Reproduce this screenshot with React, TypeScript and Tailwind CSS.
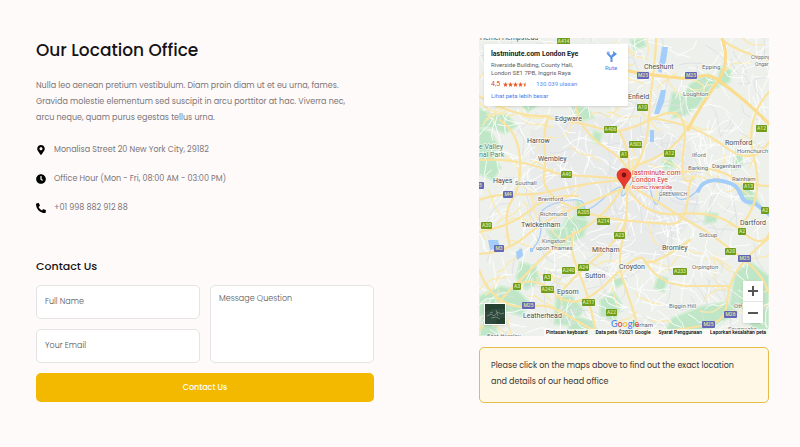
import React from "react";
import { FaClock, FaMapMarkerAlt, FaPhoneAlt } from "react-icons/fa";

type Place = [name: string, x: number, y: number, size: number, color?: string];
type Shield = [name: string, x: number, y: number, width: number];

const places: Place[] = [
  ["Hemel Hempstead", 480, 40, 7],
  ["Cheshunt", 644, 69, 7],
  ["Epping", 702, 69, 6],
  ["Chipping", 751, 59, 5],
  ["Ongar", 755, 66, 5],
  ["Enfield", 628, 99, 7],
  ["Loughton", 683, 96, 6],
  ["Edgware", 555, 121, 7],
  ["Harrow", 527, 143, 7],
  ["Wembley", 538, 161, 7],
  ["e Valley", 479, 149, 7, "#4f8a76"],
  ["nal Park", 479, 157, 7, "#4f8a76"],
  ["Hayes", 493, 183, 7],
  ["Southall", 515, 185, 6],
  ["Brentford", 538, 201, 6],
  ["Richmond", 540, 216, 6],
  ["Twickenham", 521, 227, 7],
  ["Kingston", 542, 243, 6],
  ["upon Thames", 536, 250, 6],
  ["Mitcham", 592, 252, 7],
  ["Sutton", 585, 278, 7],
  ["Epsom", 557, 294, 7],
  ["Leatherhead", 523, 318, 7],
  ["East Horsley", 487, 338, 6],
  ["Croydon", 619, 269, 7],
  ["Bromley", 662, 250, 7],
  ["Orpington", 692, 269, 6],
  ["Biggin Hill", 669, 308, 6],
  ["erham", 636, 327, 6],
  ["Sidcup", 699, 237, 6],
  ["Dartford", 740, 225, 7],
  ["Rainham", 732, 181, 6],
  ["Romford", 725, 145, 7],
  ["Hornchurch", 737, 153, 6],
  ["Ilford", 692, 157, 6],
  ["Barking", 688, 170, 6],
  ["Dagenham", 712, 168, 6],
  ["GREENWICH", 659, 196, 5],
  ["Otf", 734, 308, 6],
  ["Sevenoaks", 728, 331, 6],
];

const greenShields: Shield[] = [
  ["A414", 557, 41, 13], ["A10", 637, 107, 11], ["A406", 604, 129, 13], ["A12", 756, 128, 11],
  ["A503", 629, 144, 13], ["A1", 620, 154, 8], ["A12", 664, 153, 11], ["A40", 561, 174, 11],
  ["A13", 743, 186, 11], ["A205", 577, 212, 13], ["A214", 597, 221, 13], ["A30", 481, 225, 11],
  ["A23", 614, 235, 11], ["A2", 738, 231, 8], ["A2", 761, 210, 8], ["A3", 543, 277, 8],
  ["A240", 562, 270, 13], ["A24", 578, 267, 11], ["A3", 513, 286, 8], ["A243", 541, 289, 13],
  ["A217", 582, 302, 13], ["A22", 606, 312, 11], ["A233", 673, 271, 14], ["A20", 725, 251, 11],
];

const blueShields: Shield[] = [
  ["M25", 637, 75, 12], ["M25", 685, 75, 12], ["M4", 503, 194, 10], ["5", 477, 185, 7],
  ["M3", 494, 248, 10], ["M25", 522, 305, 13], ["M25", 738, 258, 13], ["M26", 724, 314, 13],
  ["M25", 702, 324, 13],
];

const parks = [
  "M479 128l12 4 8 14-4 12 6 10-8 12-14-6z",
  "M690 84l18-10 10 6-12 14-8 12-14 10-12 2 6-14z",
  "M672 92l14 4-6 14-12 4z",
  "M630 40l14-2 2 8-12 4z",
  "M720 66l12 4-2 12-14 6z",
  "M479 108l12 6 16 0 10 12-12 8-14-6-12 0z",
  "M566 218l16-4 6 8-4 14-14 8-18 4-4-8 12-8z",
  "M546 230l20-2 2 14-12 4z",
  "M576 198l8 8 2 14-10-2z",
  "M735 272l16-10 18 14v60l-16-6-10-22-14 0z",
  "M672 318l30-12 24-4 12 10-22 14-32 10h-22z",
  "M479 296l22-10 16 4 14 14-10 12-20-6-22 6z",
  "M520 262l16 4 4 16-14 8-10-12z",
  "M556 296l16 0 12 14-12 16-18-2z",
  "M572 316l20 4 8 16h-34z",
  "M600 300l14-8 8 12-8 18-14-6z",
  "M738 184l14 6 8 14-10 2-10-10z",
  "M662 160l10-2 4 8-12 4z",
  "M594 130l8 4-2 10-8-2z",
  "M516 100l16-6 8 10-12 8z",
  "M612 278l10-4 4 8-10 6z",
  "M735 154l8 2-2 12-8 2z",
  "M706 212l12 2-2 8-12 2z",
  "M482 318l14 4 2 14h-18z",
  "M658 276l10 2-4 14-10-4z",
  "M572 106l16 2 6 10-16 4z",
];

const mainRoads = [
  "M618 68C636 74 660 76 680 78S704 70 718 80S748 102 769 124",
  "M722 38Q730 60 720 78C708 96 696 112 688 130",
  "M722 40Q738 52 769 60",
  "M656 38C656 64 650 90 649 116S642 160 630 176",
  "M688 126Q676 150 650 160T626 178",
  "M479 160C516 158 536 166 552 172S596 174 626 180",
  "M479 200C504 190 526 198 548 192S592 182 626 180",
  "M479 232Q512 226 530 210T578 196",
  "M479 254Q508 252 526 236T580 206T622 188",
  "M626 182C612 206 598 222 574 234S534 268 514 286S494 314 479 330",
  "M626 184C630 216 622 234 620 256S632 298 640 336",
  "M626 184Q642 218 680 214T740 230T769 234",
  "M624 184C650 194 668 210 690 222S724 244 744 260S762 280 769 292",
  "M479 270C492 304 514 310 536 306S580 328 604 334S672 330 702 326S724 306 730 286S754 250 769 238",
  "M548 118Q590 124 604 130T654 118T684 146T694 178",
  "M548 118C540 138 548 156 544 174S562 204 584 212S642 222 668 224S684 190 692 178",
  "M560 38Q574 78 576 104T606 148T626 180",
  "M479 96Q514 118 548 116",
  "M650 118Q696 124 724 146T769 142",
  "M626 178C650 168 674 176 698 170S736 186 769 186",
  "M574 232C566 254 582 274 588 298S594 322 596 336",
  "M556 298Q572 278 596 258T624 226",
  "M514 286Q536 274 556 294T608 282T644 260T690 240",
  "M644 260Q660 286 688 286T730 286",
  "M500 120Q518 132 520 158T512 200T510 246",
  "M769 92Q744 120 754 158T744 222",
  "M620 132Q632 156 628 178",
];

// Park-Miller generator: keeps the side street pattern identical on every render.
function makeStreets(): string[] {
  let seed = 4711;
  const random = () => {
    seed = (seed * 16807) % 2147483647;
    return seed / 2147483647;
  };
  const streets: string[] = [];
  for (let i = 0; i < 620; i++) {
    let x = 475 + random() * 298;
    let y = 34 + random() * 306;
    let angle = random() * Math.PI * 2;
    let d = `M${x.toFixed(1)} ${y.toFixed(1)}`;
    for (let step = 0; step < 4; step++) {
      angle += (random() - 0.5) * 1.1;
      x += Math.cos(angle) * (4 + random() * 6);
      y += Math.sin(angle) * (4 + random() * 6);
      d += `L${x.toFixed(1)} ${y.toFixed(1)}`;
    }
    streets.push(d);
  }
  return streets;
}

const streets = makeStreets();

function ShieldMark({ shield, fill }: { shield: Shield; fill: string }) {
  const [name, x, y, width] = shield;
  return (
    <g>
      <rect x={x} y={y - 3} width={width} height="7" rx="1" fill={fill} />
      <text x={x + width / 2} y={y + 2} fontSize="5" fontWeight="500" textAnchor="middle" fill="#dfeaa0">
        {name}
      </text>
    </g>
  );
}

function MapDrawing() {
  return (
    <svg
      viewBox="479 38 290 298"
      preserveAspectRatio="xMidYMid slice"
      className="block h-full w-full"
      fontFamily="Roboto, sans-serif"
      role="img"
      aria-label="Map of London"
    >
      <rect x="479" y="38" width="290" height="298" fill="#edf0eb" />
      <path d="M530 130L600 116 690 140 700 210 660 260 580 250 530 210z" fill="#e9ebea" />
      <g fill="#bfe6c6">
        {parks.map((d) => (
          <path key={d} d={d} strokeLinejoin="round" stroke="#d3eed5" strokeWidth="2" />
        ))}
      </g>
      <g fill="none" strokeLinejoin="round">
        {streets.map((d, i) => (
          <path
            key={d}
            d={d}
            stroke={i % 6 === 0 ? "#fbe9ae" : i % 4 === 1 ? "#dde1e4" : "#ffffff"}
            strokeWidth={i % 6 === 0 ? 1.3 : 0.9}
          />
        ))}
      </g>
      <g fill="#a5cdf9">
        <path d="M662 47l6 0-2 14-5 12-3-2z" />
        <path d="M661 90l5 0-2 12-5 12-5 0z" />
        <path d="M650 130l4 0 0 12-4 0z" />
        <path d="M488 240l10 0 2 8-10 2z" />
        <path d="M516 252l6-4 1 8-6 4z" />
        <path d="M530 248l3 0 0 4-3 0z" />
      </g>
      <g fill="none" stroke="#a5cdf9" strokeLinecap="round">
        <path d="M532 250Q544 236 540 222T560 202T584 206T604 198T622 192T632 182T650 188T660 196T672 192T698 190" strokeWidth="1.2" />
        <path d="M698 191C704 176 722 180 732 184S740 202 748 202S758 206 771 216" strokeWidth="4" />
      </g>
      <g fill="none" strokeLinecap="round" strokeLinejoin="round">
        {mainRoads.map((d) => (
          <path key={d} d={d} stroke="#fae3a0" strokeWidth="2.2" />
        ))}
        <path
          d="M618 68C636 74 660 76 680 78S704 70 718 80S748 102 769 124M722 38Q730 60 720 78C708 96 696 112 688 130"
          stroke="#fbdc8c"
          strokeWidth="3"
        />
      </g>
      <g>
        {places.map(([name, x, y, size, color]) => (
          <text
            key={name}
            x={x}
            y={y}
            fontSize={size}
            fill={color ?? (size === 7 ? "#4c4f53" : "#6a6d71")}
            stroke="#ffffff"
            strokeWidth="1.5"
            strokeOpacity="0.7"
            paintOrder="stroke"
          >
            {name}
          </text>
        ))}
      </g>
      {greenShields.map((shield) => (
        <ShieldMark key={`${shield[0]}-${shield[1]}`} shield={shield} fill="#6f9c1c" />
      ))}
      {blueShields.map((shield) => (
        <ShieldMark key={`${shield[0]}-${shield[1]}`} shield={shield} fill="#6467b8" />
      ))}
      <g fill="#d5342b" stroke="#ffffff" strokeWidth="1.5" strokeOpacity="0.8" paintOrder="stroke">
        <text x="632" y="175" fontSize="7">lastminute.com</text>
        <text x="632" y="182" fontSize="7">London Eye</text>
        <text x="632" y="189" fontSize="6">Iconic riverside</text>
      </g>
      <path d="M624 189c-1-6-7-9-7-14a7 6.5 0 0 1 14 0c0 5-6 8-7 14z" fill="#ea3a30" stroke="#b9261e" strokeWidth="0.6" />
      <circle cx="624" cy="175" r="2.4" fill="#7d130d" />
    </svg>
  );
}

function PlaceCard() {
  return (
    <div className="absolute left-[5px] top-[6px] flex h-[62px] w-[144px] justify-between rounded-xs bg-white px-[7px] pt-[5px] font-[Roboto,sans-serif] shadow-sm">
      <div className="whitespace-nowrap text-[6px] leading-[8px] text-[#5d6063]">
        <h3 className="text-[7px] font-bold leading-[10px] text-[#1c1c1c]">lastminute.com London Eye</h3>
        <p className="mt-[2px]">
          Riverside Building, County Hall,
          <br />
          London SE1 7PB, Inggris Raya
        </p>
        <p className="mt-[2px] flex items-center gap-[2px] leading-[10px]">
          <span className="text-[7px] text-[#dd4b2b]">4,5</span>
          <svg viewBox="0 0 50 10" className="h-[5px] w-[27px]" fill="#e7612b" aria-hidden="true">
            {[0, 10, 20, 30].map((x) => (
              <path key={x} transform={`translate(${x} 0)`} d="M5 0l1.5 3.3 3.5.4-2.6 2.4.7 3.6L5 7.9 1.900 9.700l.7-3.600L0 3.700l3.500-.4z" />
            ))}
            <path d="M45 0v7.900l-3.100 1.800.7-3.600L40 3.700l3.500-.4z" />
          </svg>
          <a href="#reviews" className="ml-[5px] text-[#5b8def]">130.039 ulasan</a>
        </p>
        <a href="#map" className="mt-[3px] block text-[#4a80e8]">Lihat peta lebih besar</a>
      </div>
      <a href="#route" className="mt-[2px] flex w-[20px] flex-col items-center text-[6px] leading-[8px] text-[#4a80e8]">
        <svg viewBox="0 0 22 22" className="mb-[2px] h-[11px] w-[11px]" fill="none" aria-hidden="true">
          <path d="M3 3c1 6 8 6 8 12v7M11 15c0-5 2-8 8-9" stroke="#5b92e5" strokeWidth="4" />
          <path d="M14 0l8 6-8 6z" fill="#5b92e5" />
          <path d="M1 1h6v6z" fill="#8fb6ee" />
        </svg>
        Rute
      </a>
    </div>
  );
}

const logoLetters = [
  ["G", "text-[#4285f4]"],
  ["o", "text-[#ea4335]"],
  ["o", "text-[#fbbc05]"],
  ["g", "text-[#4285f4]"],
  ["l", "text-[#34a853]"],
  ["e", "text-[#ea4335]"],
];

function LocationMap() {
  return (
    <div className="relative h-[298px] overflow-hidden">
      <MapDrawing />
      <PlaceCard />
      <button
        type="button"
        aria-label="Satellite view"
        className="absolute bottom-[11px] left-[5px] h-[22px] w-[22px] border border-white bg-[#2e4a3c] shadow"
      >
        <svg viewBox="0 0 20 20" className="h-full w-full" fill="none" aria-hidden="true">
          <path d="M0 0h20v5H8L0 8zM12 14h8v6h-9z" fill="#26402f" />
          <path d="M2 12l4-2 3 2 4-4 3 2 3-1M5 9l3-1M6 14l5-1 4 2M11 6l2 6" stroke="#72807a" strokeWidth="1" />
        </svg>
      </button>
      <div className="absolute bottom-[13px] right-[6px] flex w-[20px] flex-col bg-white shadow-sm">
        <button type="button" aria-label="Zoom in" className="flex h-[21px] items-center justify-center border-b border-[#e6e6e6]">
          <svg viewBox="0 0 10 10" className="h-[10px] w-[10px]" stroke="#555555" strokeWidth="2" aria-hidden="true">
            <path d="M0 5h10M5 0v10" />
          </svg>
        </button>
        <button type="button" aria-label="Zoom out" className="flex h-[21px] items-center justify-center">
          <svg viewBox="0 0 10 10" className="h-[10px] w-[10px]" stroke="#555555" strokeWidth="2" aria-hidden="true">
            <path d="M0 5h10" />
          </svg>
        </button>
      </div>
      <div className="absolute bottom-[7px] left-[132px] font-[Lato,sans-serif] text-[9px] font-medium leading-[11px]">
        {logoLetters.map(([letter, color], i) => (
          <span key={i} className={color}>{letter}</span>
        ))}
      </div>
      <div className="absolute bottom-0 right-0 flex h-[7px] items-center gap-[8px] whitespace-nowrap bg-white/70 pl-[2px] pr-[3px] font-[Roboto,sans-serif] text-[5px] font-medium leading-[7px] text-black">
        <button type="button">Pintasan keyboard</button>
        <span>Data peta ©2021 Google</span>
        <a href="#terms">Syarat Penggunaan</a>
        <a href="#report">Laporkan kesalahan peta</a>
      </div>
    </div>
  );
}

const details = [
  { icon: FaMapMarkerAlt, text: "Monalisa Street 20 New York City, 29182" },
  { icon: FaClock, text: "Office Hour (Mon - Fri, 08:00 AM - 03:00 PM)" },
  { icon: FaPhoneAlt, text: "+01 998 882 912 88" },
];

const fieldClass =
  "block w-full rounded-[5px] border border-[#e6e3e5] bg-white px-2 text-[8px] font-light text-[#555555] placeholder:text-[#555555] placeholder:opacity-100 outline-none";

export default function App() {
  return (
    <main className="min-h-screen bg-[#fffafa] pb-11 pl-9 pr-[31px] pt-[38px] font-[Poppins,Inter,sans-serif]">
      <div className="flex items-start justify-between gap-[105px]">
        <section className="min-w-0 flex-[338]">
          <h1 className="text-[17px] font-medium leading-6 text-[#141214]">Our Location Office</h1>
          <p className="mt-4 text-[8px] leading-4 text-[#7a7678]">
            Nulla leo aenean pretium vestibulum. Diam proin diam ut et eu urna, fames.
            <br />
            Gravida molestie elementum sed suscipit in arcu porttitor at hac. Viverra nec,
            <br />
            arcu neque, quam purus egestas tellus urna.
          </p>
          <ul className="mt-4 flex flex-col gap-[13px]">
            {details.map(({ icon: Icon, text }) => (
              <li key={text} className="flex items-center gap-2 text-[8px] leading-4 text-[#7a7678]">
                <Icon className="h-[10px] w-[10px] text-black" aria-hidden="true" />
                <span>{text}</span>
              </li>
            ))}
          </ul>
          <h2 className="mt-[42px] text-[11px] font-medium leading-4 text-[#141214]">Contact Us</h2>
          <form className="mt-[11px]" onSubmit={(event: React.FormEvent) => event.preventDefault()}>
            <div className="grid grid-cols-2 gap-[10px]">
              <div className="flex flex-col gap-[10px]">
                <input aria-label="Full Name" type="text" placeholder="Full Name" className={`${fieldClass} h-[34px]`} />
                <input aria-label="Your Email" type="email" placeholder="Your Email" className={`${fieldClass} h-[34px]`} />
              </div>
              <textarea
                aria-label="Message Question"
                placeholder="Message Question"
                className={`${fieldClass} h-[78px] resize-none pt-2 leading-[10px]`}
              />
            </div>
            <button
              type="submit"
              className="mt-[10px] h-[29px] w-full rounded-[5px] bg-[#f2b900] text-[8px] font-medium text-white"
            >
              Contact Us
            </button>
          </form>
        </section>
        <section className="min-w-0 flex-[290]">
          <LocationMap />
          <p className="mt-[11px] rounded-[5px] border border-[#e2bd48] bg-[#fff8e6] px-[11px] pb-3 pt-[10px] text-[8px] leading-4 text-[#3a3535]">
            Please click on the maps above to find out the exact location
            <br />
            and details of our head office
          </p>
        </section>
      </div>
    </main>
  );
}
